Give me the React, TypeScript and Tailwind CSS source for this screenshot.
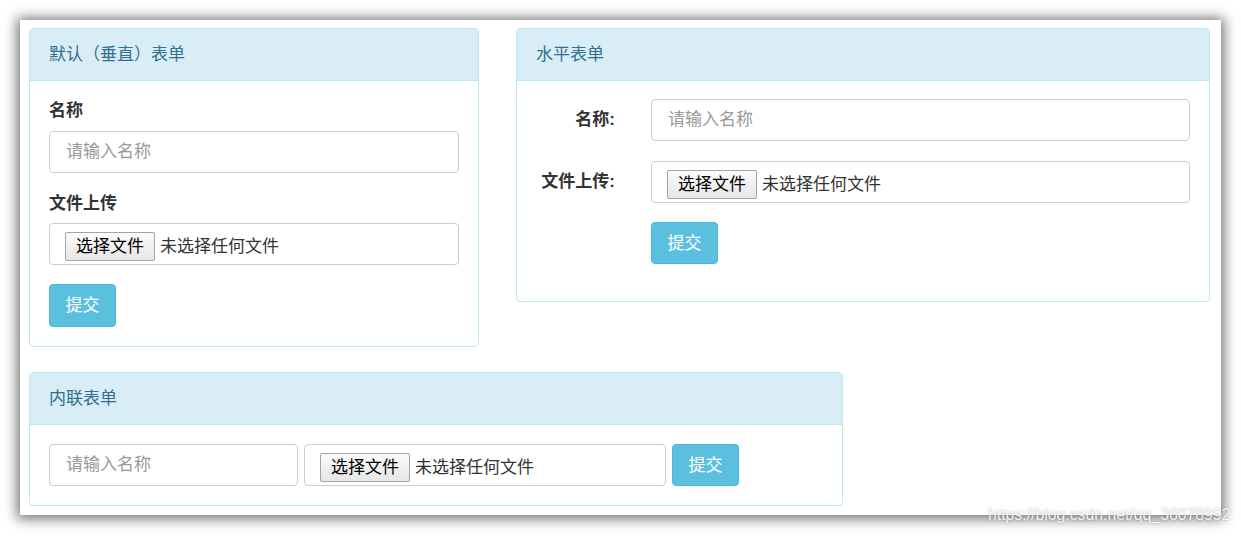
import React from 'react';

const FileBox = ({className = ''}: {className?: string}) => (
    <div className={`flex items-start h-[42px] border border-[#ccc] rounded-[4px] bg-white pl-[15px] pt-[8px] ${className}`}>
        <span className="flex items-center justify-center w-[90px] h-[29px] border border-[#a3a3a3] rounded-[2px] bg-gradient-to-b from-[#fbfbfb] to-[#e6e6e6] text-[17px] leading-none text-black">
            选择文件
        </span>
        <span className="ml-[5px] h-[29px] flex items-center text-[17px] leading-none text-[#333]">未选择任何文件</span>
    </div>
)

const TextInput = ({className = ''}: {className?: string}) => (
    <input
        type="text"
        placeholder="请输入名称"
        className={`h-[42px] border border-[#ccc] rounded-[4px] bg-white pl-[16px] text-[17px] text-[#555] placeholder:text-[#999] outline-none ${className}`}
    />
)

const SubmitButton = ({className = ''}: {className?: string}) => (
    <button className={`w-[67px] bg-[#5bc0de] border border-[#46b8da] rounded-[4px] text-white text-[17px] leading-none ${className}`}>
        提交
    </button>
)

const Panel = ({title, className = '', children}: {title: string, className?: string, children: React.ReactNode}) => (
    <div className={`border border-[#bce8f1] rounded-[4px] bg-white overflow-hidden ${className}`}>
        <div className="h-[52px] bg-[#d9edf7] border-b border-[#bce8f1] px-[19px] flex items-center text-[17px] text-[#31708f]">
            {title}
        </div>
        {children}
    </div>
)

export default function App() {
    return (
        <div className="relative w-[1241px] h-[536px] bg-white pt-[20px] pl-[20px] font-['Liberation_Sans','Noto_Sans_CJK_SC',sans-serif]">
            <div className="w-[1201px] h-[495px] bg-white pl-[9px] pt-[8px] shadow-[0_1px_12px_3px_rgba(0,0,0,0.55)]">
                <div className="flex items-start">
                    {/* vertical form */}
                    <Panel title="默认（垂直）表单" className="w-[450px]">
                        <div className="px-[19px] pt-[18px] pb-[19px] flex flex-col">
                            <label className="h-[24px] leading-[24px] text-[17px] font-bold text-[#333]">名称</label>
                            <TextInput className="mt-[8px] w-full"/>
                            <label className="mt-[19px] h-[24px] leading-[24px] text-[17px] font-bold text-[#333]">文件上传</label>
                            <FileBox className="mt-[7px]"/>
                            <SubmitButton className="mt-[19px] h-[43px]"/>
                        </div>
                    </Panel>

                    {/* horizontal form */}
                    <Panel title="水平表单" className="w-[694px] ml-[37px]">
                        <div className="pl-[20px] pr-[19px] pt-[18px] pb-[37px] flex flex-col">
                            <div className="flex items-center">
                                <label className="w-[78px] text-right text-[17px] font-bold text-[#333]">名称:</label>
                                <TextInput className="ml-[36px] flex-1"/>
                            </div>
                            <div className="flex items-center mt-[20px]">
                                <label className="w-[78px] text-right text-[17px] font-bold text-[#333] whitespace-nowrap">文件上传:</label>
                                <FileBox className="ml-[36px] flex-1"/>
                            </div>
                            <div className="flex mt-[19px] pl-[114px]">
                                <SubmitButton className="h-[42px]"/>
                            </div>
                        </div>
                    </Panel>
                </div>

                {/* inline form */}
                <Panel title="内联表单" className="w-[814px] mt-[25px]">
                    <div className="px-[19px] pt-[19px] pb-[19px] flex gap-[6px]">
                        <TextInput className="w-[249px]"/>
                        <FileBox className="w-[362px]"/>
                        <SubmitButton className="h-[42px]"/>
                    </div>
                </Panel>
            </div>

            <div className="absolute left-[988px] top-[507px] text-[15.8px] leading-none text-white/90 [text-shadow:0_0_2px_rgba(0,0,0,0.35)] whitespace-nowrap">
                https://blog.csdn.net/qq_36078992
            </div>
        </div>
    )
}
